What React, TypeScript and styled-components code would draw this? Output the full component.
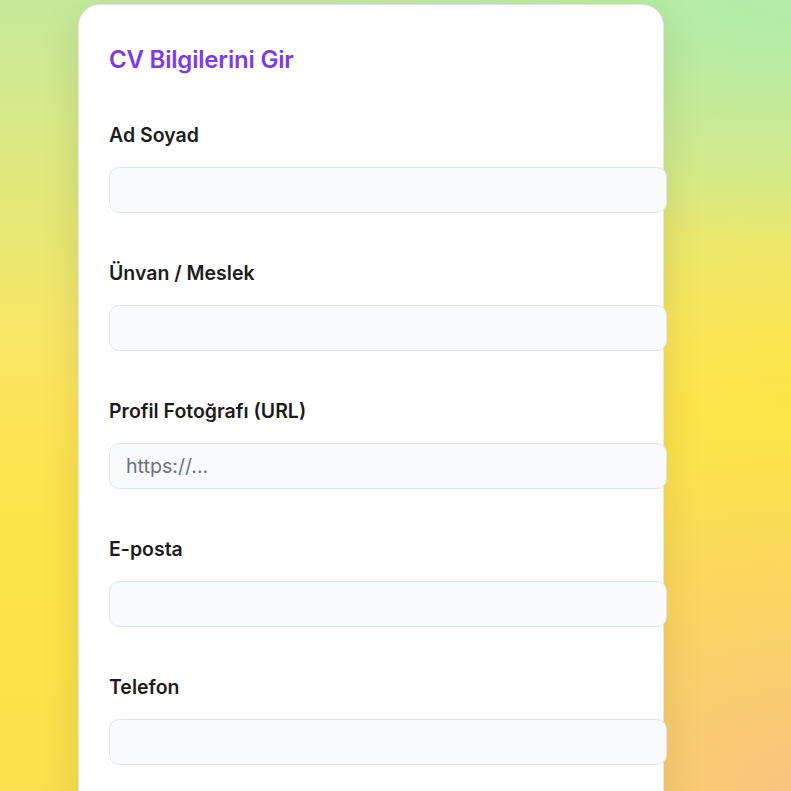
import React from "react";
import styled, { createGlobalStyle } from "styled-components";

const GlobalStyle = createGlobalStyle`
  html, body {
    margin: 0;
    padding: 0;
  }
  body {
    font-family: Inter, "Noto Sans", "Liberation Sans", sans-serif;
  }
`;

const Page = styled.div`
  height: 100vh;
  overflow: hidden;
  box-sizing: border-box;
  padding: 4px 0 0 78px;
  background:
    radial-gradient(ellipse 55% 45% at 100% 100%, rgba(249, 196, 128, 1) 0%, rgba(249, 196, 128, 0) 100%),
    radial-gradient(ellipse 60% 30% at 100% 0%, rgba(176, 237, 170, 0.9) 0%, rgba(176, 237, 170, 0) 100%),
    radial-gradient(ellipse 40% 25% at 100% 50%, rgba(252, 228, 64, 0.7) 0%, rgba(252, 228, 64, 0) 100%),
    linear-gradient(180deg, #c4ea9c 0%, #d6e98a 13%, #e3e877 26%, #f4e668 40%, #fce45a 50%, #fde34a 66%, #fde24a 85%, #fbdf4e 100%);
`;

const Card = styled.form`
  width: 586px;
  box-sizing: border-box;
  background: #ffffff;
  border: 1px solid #e2e5ea;
  border-radius: 22px;
  padding: 40px 30px 40px;
  box-shadow: 0 10px 40px rgba(0, 0, 0, 0.1);
  display: flex;
  flex-direction: column;
`;

const Title = styled.h2`
  margin: 0 0 50px;
  font-size: 24px;
  line-height: 29px;
  font-weight: 600;
  color: #7c3aed;
  letter-spacing: -0.2px;
`;

const Field = styled.div`
  display: flex;
  flex-direction: column;
  margin-bottom: 49px;
`;

const Label = styled.label`
  display: block;
  margin-bottom: 20px;
  font-size: 19.5px;
  line-height: 23px;
  font-weight: 600;
  color: #1c1c1c;
`;

const Input = styled.input`
  box-sizing: content-box;
  width: 100%;
  margin: 0;
  padding: 11px 16px;
  font-family: Inter, "Noto Sans", "Liberation Sans", sans-serif;
  font-size: 19.6px;
  line-height: 22px;
  height: 22px;
  color: #1f2937;
  background: #f8fafc;
  border: 1px solid #e0e6ee;
  border-radius: 10px;
  outline: none;
  &::placeholder {
    color: #6b7280;
  }
`;

const fields: { id: string; label: string; placeholder?: string }[] = [
  { id: "name", label: "Ad Soyad" },
  { id: "title", label: "Ünvan / Meslek" },
  { id: "photo", label: "Profil Fotoğrafı (URL)", placeholder: "https://..." },
  { id: "email", label: "E-posta" },
  { id: "phone", label: "Telefon" },
];

export default function App() {
  return (
    <>
      <GlobalStyle />
      <Page>
        <Card onSubmit={(e) => e.preventDefault()}>
          <Title>CV Bilgilerini Gir</Title>
          {fields.map((f) => (
            <Field key={f.id}>
              <Label htmlFor={f.id}>{f.label}</Label>
              <Input id={f.id} type="text" placeholder={f.placeholder} />
            </Field>
          ))}
        </Card>
      </Page>
    </>
  );
}
